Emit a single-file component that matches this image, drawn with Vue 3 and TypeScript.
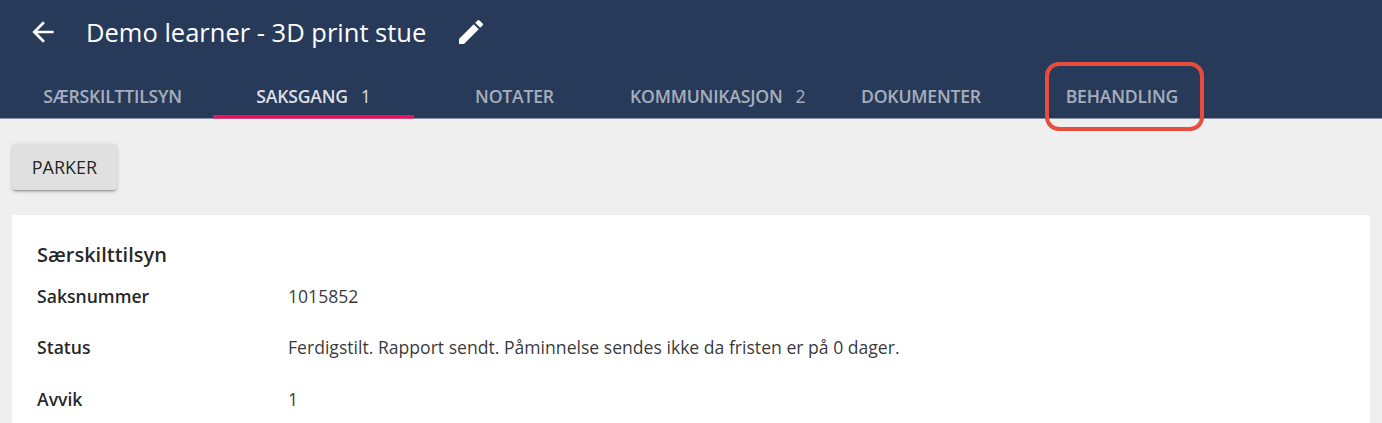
<script setup lang="ts">
interface Tab { label: string; count?: number; active?: boolean }
const tabs: Tab[] = [
  { label: 'SÆRSKILTTILSYN' },
  { label: 'SAKSGANG', count: 1, active: true },
  { label: 'NOTATER' },
  { label: 'KOMMUNIKASJON', count: 2 },
  { label: 'DOKUMENTER' },
  { label: 'BEHANDLING' },
]
const rows = [
  { key: 'Saksnummer', value: '1015852' },
  { key: 'Status', value: 'Ferdigstilt. Rapport sendt. Påminnelse sendes ikke da fristen er på 0 dager.' },
  { key: 'Avvik', value: '1' },
]
</script>

<template>
  <div class="page">
    <header class="header">
      <div class="titlebar">
        <svg class="back" viewBox="0 0 24 24" width="32" height="32"><path fill="#fff" d="M20 11H7.83l5.59-5.59L12 4l-8 8 8 8 1.41-1.41L7.83 13H20v-2z"/></svg>
        <h1 class="title">Demo learner - 3D print stue</h1>
        <svg class="edit" viewBox="0 0 24 24" width="32" height="32"><path fill="#fff" d="M3 17.25V21h3.75L17.81 9.94l-3.75-3.75L3 17.25zM20.71 7.04a1 1 0 0 0 0-1.41l-2.34-2.34a1 1 0 0 0-1.41 0l-1.83 1.83 3.75 3.75 1.83-1.83z"/></svg>
      </div>
      <nav class="tabs">
        <div v-for="t in tabs" :key="t.label" class="tab" :class="{ active: t.active }">
          <span>{{ t.label }}</span><span v-if="t.count" class="count">{{ t.count }}</span>
        </div>
      </nav>
    </header>
    <main class="content">
      <button class="btn">PARKER</button>
      <section class="card">
        <h2 class="card-title">Særskilttilsyn</h2>
        <div v-for="r in rows" :key="r.key" class="row">
          <div class="key">{{ r.key }}</div>
          <div class="value">{{ r.value }}</div>
        </div>
      </section>
    </main>
    <div class="highlight"></div>
  </div>
</template>

<style scoped>
.page {
  position: relative;
  width: 1382px;
  height: 423px;
  overflow: hidden;
  background: #efefef;
  font-family: "Open Sans", sans-serif;
}
.header {
  height: 119px;
  background: #273a5a;
  box-sizing: border-box;
  border-bottom: 1px solid #8b95a8;
}
.titlebar {
  display: flex;
  align-items: center;
  height: 63px;
  padding-left: 27px;
}
.title {
  margin: 0 0 0 27px;
  font-size: 25.5px;
  font-weight: 500;
  color: #fff;
  line-height: 32px;
}
.edit {
  margin-left: 29px;
}
.tabs {
  display: flex;
  height: 55px;
  padding-left: 12px;
}
.tab {
  min-width: 201px;
  box-sizing: border-box;
  padding: 11px 15px 0;
  height: 55px;
  display: flex;
  align-items: center;
  justify-content: center;
  font-size: 17.6px;
  font-weight: 600;
  letter-spacing: -0.2px;
  color: rgba(255, 255, 255, 0.6);
  white-space: nowrap;
}
.tab.active {
  color: rgba(255, 255, 255, 0.85);
  box-shadow: inset 0 -3px 0 #fa0a5a, 0 1px 0 rgba(250, 10, 90, 0.5);
}
.count {
  margin-left: 13px;
  font-weight: 400;
}
.content {
  padding: 25px 12px 0;
}
.btn {
  display: block;
  width: 105px;
  height: 46px;
  padding: 0;
  border: none;
  border-radius: 4px;
  background: #e0e0e0;
  color: rgba(0, 0, 0, 0.87);
  font-family: inherit;
  font-size: 18px;
  font-weight: 500;
  box-shadow: 0 3px 1px -2px rgba(0,0,0,.2), 0 2px 2px 0 rgba(0,0,0,.14), 0 1px 5px 0 rgba(0,0,0,.12);
}
.card {
  margin-top: 25px;
  background: #fff;
  width: 1358px;
  height: 300px;
  box-sizing: border-box;
  border-radius: 2px;
  padding: 26px 25px;
}
.card-title {
  margin: 0 0 12.5px;
  font-size: 20px;
  font-weight: 600;
  line-height: 28px;
  color: rgba(0, 0, 0, 0.87);
}
.row {
  display: flex;
  height: 51.5px;
  font-size: 17.6px;
  line-height: 28px;
  color: rgba(0, 0, 0, 0.8);
}
.key {
  width: 251px;
  font-weight: 600;
  color: rgba(0,0,0,.87);
}
.highlight {
  position: absolute;
  left: 1045px;
  top: 62px;
  width: 159px;
  height: 69px;
  box-sizing: border-box;
  border: 4px solid #e74c3c;
  border-radius: 14px;
}
</style>
